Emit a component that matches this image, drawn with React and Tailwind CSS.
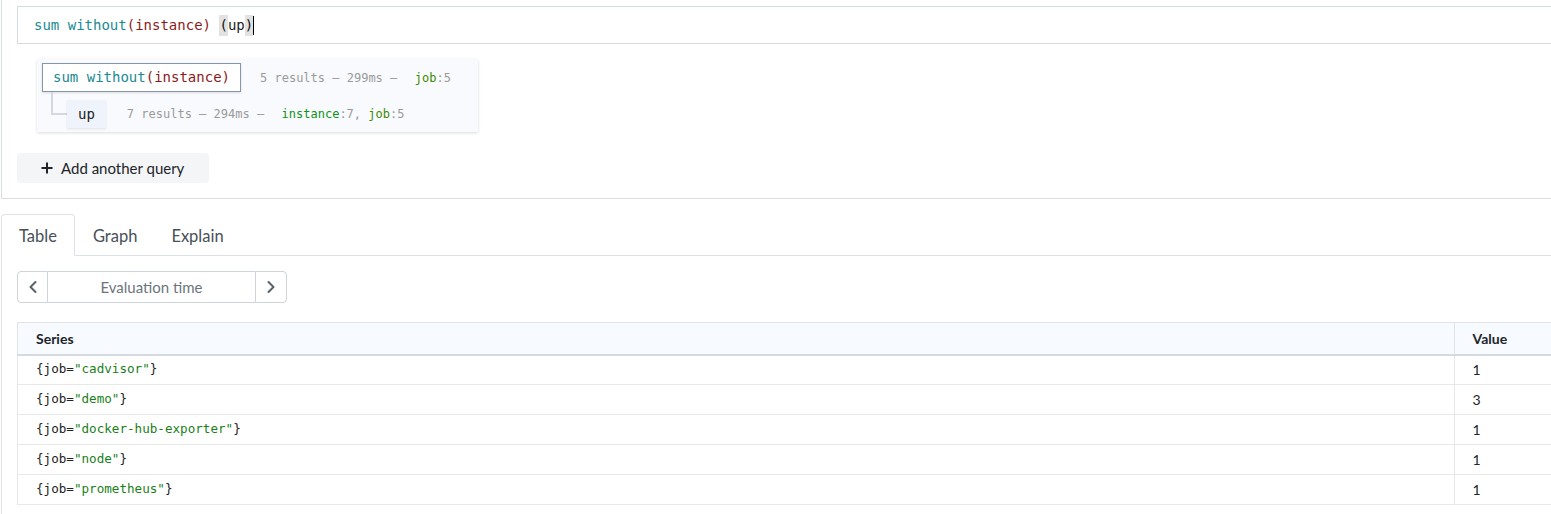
import React from 'react';

const mono = "font-['DejaVu_Sans_Mono',monospace]";

const rows = [
  { job: 'cadvisor', value: '1' },
  { job: 'demo', value: '3' },
  { job: 'docker-hub-exporter', value: '1' },
  { job: 'node', value: '1' },
  { job: 'prometheus', value: '1' },
];

const Chevron = ({ dir }) => (
  <svg width="10" height="14" viewBox="0 0 10 14" fill="none">
    <path
      d={dir === 'left' ? 'M7.5 2 L2.5 7 L7.5 12' : 'M2.5 2 L7.5 7 L2.5 12'}
      stroke="#5a6269"
      strokeWidth="2"
      strokeLinecap="round"
      strokeLinejoin="round"
    />
  </svg>
);

const QueryInput = () => (
  <div className={`h-[38px] flex items-center border border-r-0 border-[#d4dbe2] bg-white pl-[16px] text-[14px] ${mono}`}>
    <span className="text-[#1a8a93]">sum without</span>
    <span className="text-[#8c1a1a]">(instance)</span>
    <span>&nbsp;</span>
    <span className="bg-[#e2e2e2] text-[#111]">(</span>
    <span className="text-[#222]">up</span>
    <span className="bg-[#e2e2e2] text-[#111]">)</span>
    <span className="w-px h-[19px] bg-black" />
  </div>
);

const ExplainTree = () => (
  <div className="mt-[15px] ml-[20px] w-[441px] bg-[#f8fafd] px-[5px] pt-[4px] pb-[4px] shadow-[0_1px_3px_rgba(0,0,0,0.14)]">
    <div className="flex items-center">
      <div className={`h-[29px] flex items-center px-[10px] bg-white border border-[#8797aa] shadow-[0_1px_2px_rgba(0,0,0,0.12)] text-[14px] ${mono}`}>
        <span className="text-[#1a8a93]">sum without</span>
        <span className="text-[#8c1a1a]">(instance)</span>
      </div>
      <div className={`ml-[19px] text-[12px] text-[#9a9a9a] ${mono}`}>
        5 results – 299ms – &nbsp;<span className="ml-[3px] text-[#3d8a00]">job</span>:5
      </div>
    </div>
    <div className="flex items-center mt-[8px]">
      <div className="self-start -mt-[8px] ml-[9px] w-[16px] h-[23px] border-l-2 border-b-2 border-[#d2d8de]" />
      <div className={`h-[28px] flex items-center px-[11px] bg-[#eef3fc] shadow-[0_1px_2px_rgba(0,0,0,0.1)] text-[14px] text-[#222] ${mono}`}>
        up
      </div>
      <div className={`ml-[21px] text-[12px] text-[#9a9a9a] ${mono}`}>
        7 results – 294ms – &nbsp;<span className="ml-[3px] text-[#10911a]">instance</span>:7, <span className="text-[#3d8a00]">job</span>:5
      </div>
    </div>
  </div>
);

export default function App() {
  return (
    <div className="min-h-screen w-full overflow-hidden bg-white font-['Lato',sans-serif] text-[#212529]">
      {/* query panel */}
      <div className="ml-px border-l border-b border-[#d9dee3] pt-[6px] pb-[15px] pl-[15px]">
        <QueryInput />
        <ExplainTree />
        <button className="mt-[21px] h-[30px] w-[192px] flex items-center gap-[8px] pl-[24px] rounded-[4px] bg-[#f4f5f7] text-[15px] text-[#212529]">
          <svg width="12" height="12" viewBox="0 0 12 12">
            <path d="M6 0.5 V11.5 M0.5 6 H11.5" stroke="#212529" strokeWidth="2" />
          </svg>
          Add another query
        </button>
      </div>

      {/* tabs */}
      <div className="mt-[15px] ml-px flex border-b border-[#dee2e6] text-[16.5px]">
        <div className="-mb-px h-[42px] flex items-center pt-[3px] px-[17px] bg-white border border-[#dee2e6] border-b-white rounded-t-[4px] text-[#495057]">
          Table
        </div>
        <div className="h-[41px] flex items-center pt-[3px] pl-[18px] pr-[17px] text-[#495057]">Graph</div>
        <div className="h-[41px] flex items-center pt-[3px] px-[17px] text-[#495057]">Explain</div>
      </div>

      <div className="ml-px border-l border-[#dee2e6] pl-[15px] pt-[15px] pb-[10px]">
        {/* evaluation time */}
        <div className="flex h-[32px] w-[270px]">
          <button className="w-[31px] flex items-center justify-center border border-[#ced4da] rounded-l-[4px]">
            <Chevron dir="left" />
          </button>
          <div className="flex-1 flex items-center justify-center border-y border-[#ced4da] text-[15px] text-[#6c757d]">
            Evaluation time
          </div>
          <button className="w-[32px] flex items-center justify-center border border-[#ced4da] rounded-r-[4px]">
            <Chevron dir="right" />
          </button>
        </div>

        {/* table */}
        <table className="mt-[19px] w-[1580px] border-collapse text-[14px]">
          <thead>
            <tr className="h-[32px] bg-[#f7faff]">
              <th className="text-left font-bold px-[18px] border-t border-l border-b-2 border-[#e0e4e8] border-b-[#d5dae0]">Series</th>
              <th className="w-[143px] text-left font-bold px-[18px] border-t border-l border-b-2 border-[#e0e4e8] border-b-[#d5dae0]">Value</th>
            </tr>
          </thead>
          <tbody>
            {rows.map((r) => (
              <tr key={r.job} className="h-[30px]">
                <td className={`px-[18px] border-l border-b border-[#e8e8e8] text-[12.6px] ${mono}`}>
                  <span className="text-[#222]">{'{job='}</span>
                  <span className="text-[#1a7f1a]">"{r.job}"</span>
                  <span className="text-[#222]">{'}'}</span>
                </td>
                <td className="px-[18px] border-l border-b border-[#e8e8e8] text-[14px]">{r.value}</td>
              </tr>
            ))}
          </tbody>
        </table>
      </div>
    </div>
  );
}
